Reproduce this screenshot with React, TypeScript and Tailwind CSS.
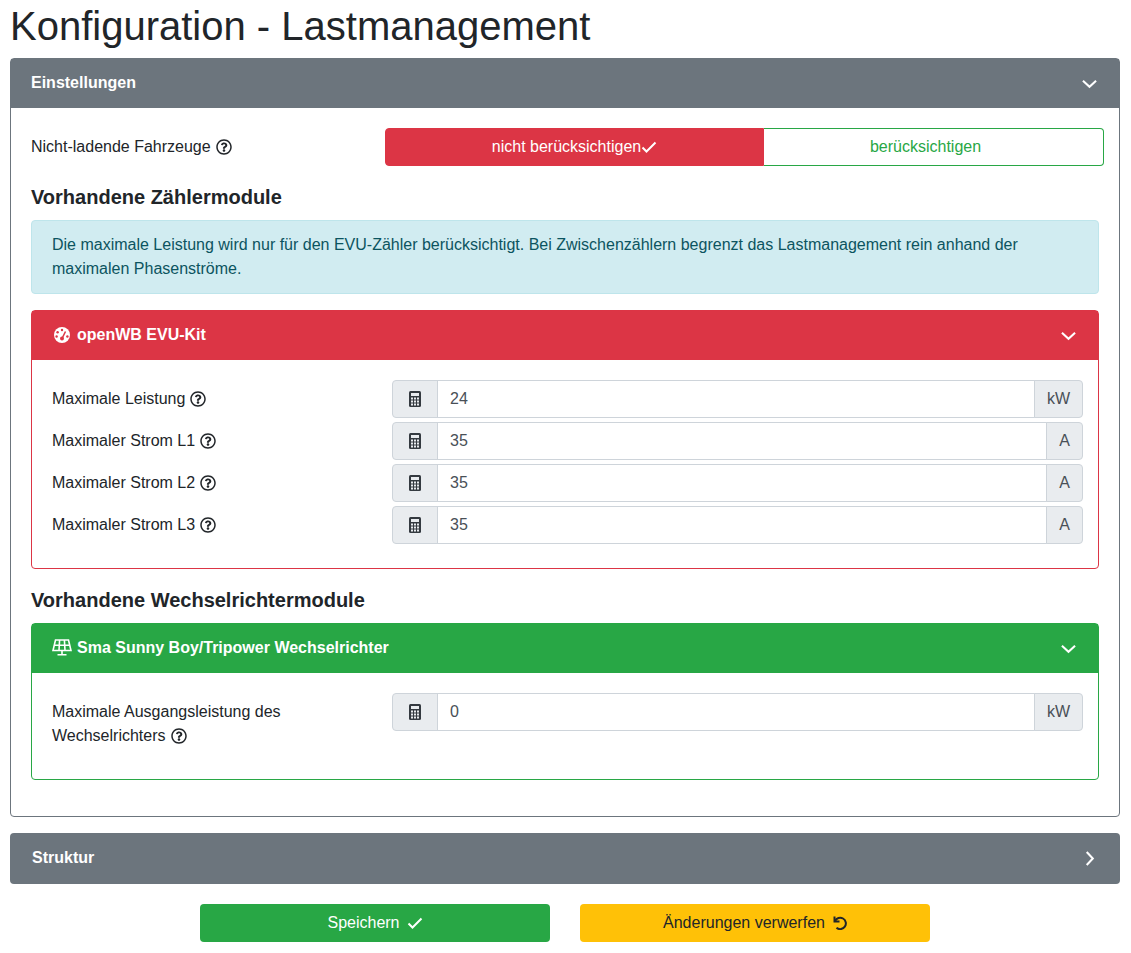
import React from "react";
import { FaRegQuestionCircle } from "react-icons/fa";

const Q = () => <FaRegQuestionCircle className="inline-block ml-[5px] w-4 h-4 text-[#212529] align-[-2.5px]" />;

const Check = ({ className = "" }: { className?: string }) => (
  <svg viewBox="0 0 16 16" className={className} fill="none" stroke="currentColor" strokeWidth="2"><path d="M1.5 8.5 L5.5 12.5 L14.5 3.5" /></svg>
);

const ChevronDown = () => (
  <svg viewBox="0 0 16 10" className="w-[15px] h-[10px] mt-[2px]" fill="none" stroke="currentColor" strokeWidth="2.2"><path d="M1 1.5 L8 8 L15 1.5" /></svg>
);

const ChevronRight = () => (
  <svg viewBox="0 0 10 16" className="w-[10px] h-[15px] mt-[2px]" fill="none" stroke="currentColor" strokeWidth="2.2"><path d="M1.5 1 L8 8 L1.5 15" /></svg>
);

const Solar = () => (
  <svg viewBox="0 0 20 17" className="w-[20px] h-[17px] mr-[5px]" fill="none" stroke="currentColor" strokeWidth="1.6">
    <path d="M3.5 1 H16.5 L19 11.5 H1 Z M7.6 1 L7 11.5 M12.4 1 L13 11.5 M2.2 6.2 H17.8 M10 11.5 V15.5 M5.5 15.8 H14.5" />
  </svg>
);

const Gauge = () => (
  <svg viewBox="0 0 16 16" className="w-4 h-4 ml-[2px] mr-[7px]">
    <circle cx="8" cy="8" r="8" fill="currentColor" />
    <g fill="#dc3545">
      <circle cx="8" cy="3" r="1.2" />
      <circle cx="3.6" cy="5.2" r="1.2" />
      <circle cx="2.6" cy="9.5" r="1.2" />
      <circle cx="13.4" cy="9.5" r="1.2" />
      <circle cx="8" cy="11.5" r="2" />
    </g>
    <path d="M8 11.5 L11.5 4.5" stroke="#dc3545" strokeWidth="1.6" />
  </svg>
);

const Calc = () => (
  <svg viewBox="0 0 12 16" className="w-3 h-4 text-[#343a40]">
    <rect x="0" y="0" width="12" height="16" rx="1.5" fill="currentColor" />
    <rect x="2" y="2" width="8" height="3" fill="#e9ecef" />
    <g fill="#e9ecef">
      <rect x="2" y="6.5" width="2" height="2" /><rect x="5" y="6.5" width="2" height="2" /><rect x="8" y="6.5" width="2" height="2" />
      <rect x="2" y="9.5" width="2" height="2" /><rect x="5" y="9.5" width="2" height="2" /><rect x="8" y="9.5" width="2" height="2" />
      <rect x="2" y="12.5" width="2" height="2" /><rect x="5" y="12.5" width="2" height="2" /><rect x="8" y="12.5" width="2" height="2" />
    </g>
  </svg>
);

const Undo = () => (
  <svg viewBox="0 0 14 14" className="w-[14px] h-[14px]" fill="none" stroke="currentColor" strokeWidth="2">
    <path d="M1.5 0.5 V5.5 H6.5" />
    <path d="M2 5 A5.7 5.7 0 1 1 3.5 11.8" />
  </svg>
);

function Row({ label, value, unit, tall = false }: { label: React.ReactNode; value: string; unit: string; tall?: boolean }) {
  return (
    <div className="flex items-start">
      <div className={`w-[340px] shrink-0 leading-6 ${tall ? "pt-[7px] pb-[7px] pr-6" : "py-[7px]"}`}>{label}</div>
      <div className="flex flex-1 h-[38px]">
        <div className="w-[46px] flex items-center justify-center bg-[#e9ecef] border border-[#ced4da] rounded-l-[4px]">
          <Calc />
        </div>
        <div className="flex-1 -ml-px px-3 flex items-center border border-[#ced4da] text-[#495057] bg-white">{value}</div>
        <div className="-ml-px px-3 flex items-center bg-[#e9ecef] border border-[#ced4da] rounded-r-[4px] text-[#495057]">{unit}</div>
      </div>
    </div>
  );
}

export default function App() {
  return (
    <div className="pl-[10px] pr-[11px] text-[16px] text-[#212529] bg-white h-[953px] overflow-hidden [font-family:'Liberation_Sans',Arial,sans-serif]">
      <h1 className="text-[40px] leading-[48px] h-[58px] pt-[2px] font-normal">Konfiguration - Lastmanagement</h1>

      <section className="border border-[#6c757d] rounded-[4px] h-[759px]">
        <div className="h-[49px] pb-[2px] bg-[#6c757d] text-white font-bold flex items-center justify-between pl-5 pr-[22px]">
          <span>Einstellungen</span>
          <ChevronDown />
        </div>
        <div className="pt-5 pl-5 pr-[15px]">
          <div className="flex items-center h-[38px]">
            <div className="w-[354px] shrink-0">Nicht-ladende Fahrzeuge<Q /></div>
            <div className="flex flex-1 h-[38px]">
              <div className="flex-1 bg-[#dc3545] border border-[#dc3545] rounded-l-[4px] text-white flex items-center justify-center">
                nicht berücksichtigen<Check className="w-4 h-4" />
              </div>
              <div className="w-[340px] pr-4 border border-l-0 border-[#28a745] rounded-r-[4px] text-[#28a745] flex items-center justify-center">
                berücksichtigen
              </div>
            </div>
          </div>

          <div className="pr-[5px]">
            <h3 className="text-[20px] leading-6 font-bold mt-[19px] mb-[11px]">Vorhandene Zählermodule</h3>
            <div className="h-[74px] px-5 py-3 bg-[#d1ecf1] border border-[#bee5eb] rounded-[4px] text-[#0c5460] leading-6 mb-4">
              Die maximale Leistung wird nur für den EVU-Zähler berücksichtigt. Bei Zwischenzählern begrenzt das Lastmanagement rein anhand der maximalen Phasenströme.
            </div>

            <div className="border border-[#dc3545] rounded-[4px] h-[259px]">
              <div className="h-[49px] pb-[2px] bg-[#dc3545] text-white font-bold flex items-center justify-between pl-5 pr-[22px]">
                <span className="flex items-center"><Gauge />openWB EVU-Kit</span>
                <ChevronDown />
              </div>
              <div className="pt-5 pl-5 pr-[15px] flex flex-col gap-1">
                <Row label={<>Maximale Leistung<Q /></>} value="24" unit="kW" />
                <Row label={<>Maximaler Strom L1<Q /></>} value="35" unit="A" />
                <Row label={<>Maximaler Strom L2<Q /></>} value="35" unit="A" />
                <Row label={<>Maximaler Strom L3<Q /></>} value="35" unit="A" />
              </div>
            </div>

            <h3 className="text-[20px] leading-6 font-bold mt-[19px] mb-[11px]">Vorhandene Wechselrichtermodule</h3>

            <div className="border border-[#28a745] rounded-[4px] h-[157px]">
              <div className="h-[49px] pb-[2px] bg-[#28a745] text-white font-bold flex items-center justify-between pl-5 pr-[22px]">
                <span className="flex items-center"><Solar />Sma Sunny Boy/Tripower Wechselrichter</span>
                <ChevronDown />
              </div>
              <div className="pt-5 pl-5 pr-[15px]">
                <Row tall label={<>Maximale Ausgangsleistung des Wechselrichters<Q /></>} value="0" unit="kW" />
              </div>
            </div>
          </div>
        </div>
      </section>

      <section className="mt-4 h-[51px] pb-[2px] bg-[#6c757d] rounded-[4px] text-white font-bold flex items-center justify-between pl-[22px] pr-[25px]">
        <span>Struktur</span>
        <ChevronRight />
      </section>

      <div className="mt-5 flex justify-center gap-[30px]">
        <button className="w-[350px] h-[38px] bg-[#28a745] text-white rounded-[4px] flex items-center justify-center gap-[7px]">
          Speichern <Check className="w-4 h-4" />
        </button>
        <button className="w-[350px] h-[38px] bg-[#ffc107] text-[#212529] rounded-[4px] flex items-center justify-center gap-[8px]">
          Änderungen verwerfen <Undo />
        </button>
      </div>
    </div>
  );
}
